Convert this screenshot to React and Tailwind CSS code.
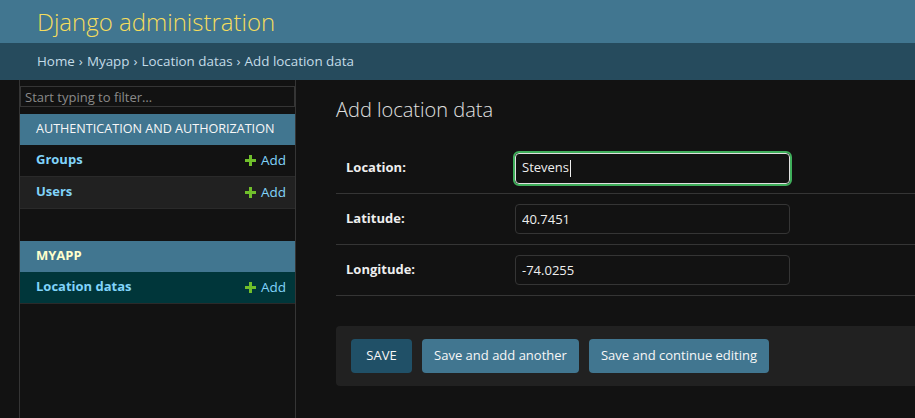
import React from 'react';

const font = { fontFamily: '"Open Sans", "Liberation Sans", sans-serif' };

function PlusIcon() {
  return (
    <svg width="11" height="11" viewBox="0 0 11 11" className="shrink-0">
      <path d="M4 0h3v4h4v3H7v4H4V7H0V4h4z" fill="#70bf2b" />
    </svg>
  );
}

function ModelRow({ name, selected, shaded }) {
  const bg = selected ? 'bg-[#00363a]' : shaded ? 'bg-[#212121]' : 'bg-[#121212]';
  return (
    <div className={`flex h-[32px] items-center justify-between border-b border-[#2a2a2a] pl-4 pr-[9px] ${bg}`}>
      <a className="text-[13px] font-bold text-[#81d4fa]">{name}</a>
      <a className="flex items-center gap-[5px] text-[13.5px] text-[#81d4fa]">
        <PlusIcon /> Add
      </a>
    </div>
  );
}

function Field({ label, value, focused }) {
  return (
    <div className="flex h-[51px] items-center border-b border-[#353535] px-[10px]">
      <label className="w-[169px] text-[13px] font-bold text-[#eeeeee]">{label}:</label>
      {focused ? (
        <div className="flex h-[31px] w-[275px] items-center rounded-[4px] border border-[#e0e0e0] px-[6px] text-[13px] text-[#eeeeee] outline-2 outline-[#3fae5b]">
          {value}
          <span className="ml-px inline-block h-[17px] w-px bg-[#eeeeee]" />
        </div>
      ) : (
        <input
          defaultValue={value}
          className="h-[30px] w-[275px] rounded-[4px] border border-[#353535] bg-[#121212] px-[6px] text-[13px] text-[#eeeeee] outline-none"
          style={font}
        />
      )}
    </div>
  );
}

export default function App() {
  return (
    <div className="flex h-[418px] w-[915px] flex-col overflow-hidden bg-[#121212]" style={font}>
      <header className="flex h-[43px] shrink-0 items-center bg-[#417690] pl-[37px]">
        <h1 className="text-[24px] font-light text-[#f5dd5d]">Django administration</h1>
      </header>
      <nav className="flex h-[37px] shrink-0 items-center bg-[#264b5d] pl-[37px] text-[13.4px] text-[#c4dce8]">
        <a>Home</a>
        <span className="mx-[4px]">›</span>
        <a>Myapp</a>
        <span className="mx-[4px]">›</span>
        <a>Location datas</a>
        <span className="mx-[4px]">›</span>
        <span>Add location data</span>
      </nav>
      <div className="flex min-h-0 flex-1">
        <div className="w-[20px] shrink-0 border-r border-[#353535]" />
        <aside className="w-[276px] shrink-0 border-r border-[#353535]">
          <input
            placeholder="Start typing to filter…"
            className="mt-[6px] h-[21px] w-full border border-[#353535] bg-[#121212] px-[4px] text-[13px] text-[#eeeeee] placeholder:text-[#8a8a8a] outline-none"
            style={font}
          />
          <div className="mt-[6px]">
            <div className="flex h-[31px] items-center bg-[#417690] pl-4 text-[12.6px] text-[#f7f7f7]">
              AUTHENTICATION AND AUTHORIZATION
            </div>
            <ModelRow name="Groups" />
            <ModelRow name="Users" shaded />
          </div>
          <div className="mt-[32px]">
            <div className="flex h-[31px] items-center bg-[#417690] pl-4 text-[13px] font-bold text-[#ffffcc]">
              MYAPP
            </div>
            <ModelRow name="Location datas" selected />
          </div>
        </aside>
        <main className="min-w-0 flex-1 pl-[40px] pt-[16px]">
          <h2 className="text-[20px] font-light leading-[28px] text-[#e0e0e0]">Add location data</h2>
          <form className="mt-[19px]">
            <Field label="Location" value="Stevens" focused />
            <Field label="Latitude" value="40.7451" />
            <Field label="Longitude" value="-74.0255" />
            <div className="mt-[30px] flex h-[60px] items-center gap-[10px] rounded-l-[4px] bg-[#212121] px-[15px]">
              <button type="button" className="h-[34px] w-[61px] rounded-[4px] bg-[#205067] text-[13px] text-[#f7f7f7]">
                SAVE
              </button>
              <button type="button" className="h-[34px] w-[157px] rounded-[4px] bg-[#417690] text-[13px] text-[#f7f7f7]">
                Save and add another
              </button>
              <button type="button" className="h-[34px] w-[180px] rounded-[4px] bg-[#417690] text-[13px] text-[#f7f7f7]">
                Save and continue editing
              </button>
            </div>
          </form>
        </main>
      </div>
    </div>
  );
}
